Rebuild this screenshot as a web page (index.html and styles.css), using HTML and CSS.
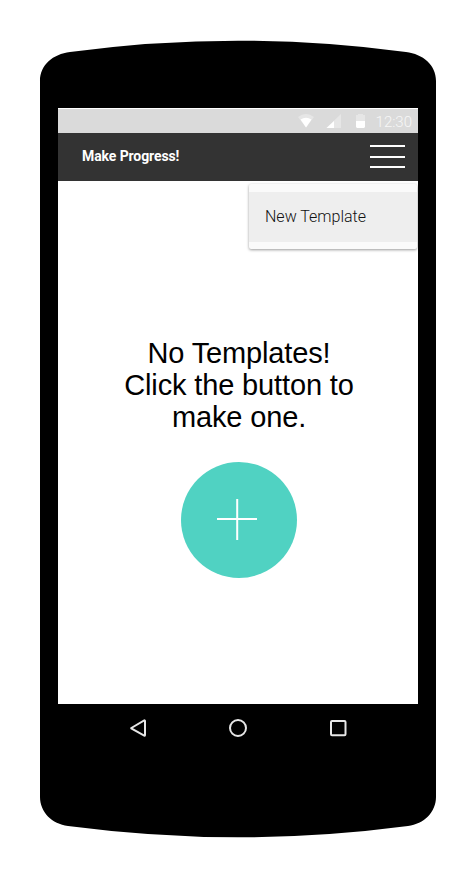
FILE: index.html
```html
<!DOCTYPE html>
<html lang="en">
<head>
<meta charset="utf-8">
<title>Make Progress!</title>
<link rel="stylesheet" href="styles.css">
</head>
<body>
<div class="phone">
  <svg class="shell" viewBox="0 0 476 878" aria-hidden="true">
    <path d="M40 81C40 65 53 54 70 52Q154 40.7 238 40.7Q322 40.7 406 52C423 54 436 65 436 81V797C436 812 424 824 408 826Q322 837.3 238 837.3Q154 837.3 68 826C52 824 40 812 40 797Z"/>
  </svg>
  <main class="screen">
    <div class="status">
      <svg class="status-icons" viewBox="0 0 72 24" aria-hidden="true">
        <path class="dim" d="M0 8Q8 2 16 8L8 18.500Z"/>
        <path class="lit" d="M2.500 10.500Q8 7 13.500 10.500L8 18.500Z"/>
        <path class="dim" d="M43 5V19H28.500Z"/>
        <path class="lit" d="M36 12V19H28.500Z"/>
        <path class="dim" d="M60 5H65V6H67V13H58V6H60Z"/>
        <path class="lit" d="M58 12H67V18L66 19H59L58 18Z"/>
      </svg>
      <span class="clock">12:30</span>
    </div>
    <header class="bar">
      <h1 class="title">Make Progress!</h1>
      <button class="burger" aria-label="Menu"><i></i><i></i><i></i></button>
      <div class="menu"><div class="menu-item"><span class="menu-label">New Template</span></div></div>
    </header>
    <section class="empty">
      <p class="message">No Templates!<br>Click the button to<br>make one.</p>
      <button class="add" aria-label="Add template">
        <svg class="plus" viewBox="0 0 116 116" aria-hidden="true"><path d="M36 57H76M56.200 37V78"/></svg>
      </button>
    </section>
  </main>
  <nav class="nav">
    <svg viewBox="0 0 20 20"><path d="M3.300 10L16.200 2.400Q17 2.200 17 3V17Q17 17.900 16.200 17.600L3.300 10.500Z"/></svg>
    <svg viewBox="0 0 20 20"><circle cx="10" cy="10" r="8"/></svg>
    <svg viewBox="0 0 20 20"><rect x="3" y="3" width="14.500" height="14.300" rx="1"/></svg>
  </nav>
</div>
</body>
</html>
```
FILE: styles.css
```css
* { box-sizing: border-box; }
body { margin: 0; background: #fff; }
button { border: 0; padding: 0; }
.phone {
  position: relative;
  width: 476px;
  height: 878px;
  padding: 108px 58px 0;
}
.shell { position: absolute; inset: 0; width: 476px; height: 878px; }
.screen {
  position: relative;
  display: flex;
  flex-direction: column;
  height: 596px;
  background: #fff;
}
.status {
  display: flex;
  justify-content: flex-end;
  height: 25px;
  padding-right: 6px;
  border-top: 1px solid #fff;
  background: #dadada;
}
.status-icons { width: 72px; height: 24px; margin-right: 6px; }
.dim { fill: #e6e6e6; }
.lit { fill: #fff; }
.clock {
  color: #f7f7f7;
  font: 300 15px/26px Roboto, sans-serif;
}
.bar {
  position: relative;
  display: flex;
  justify-content: space-between;
  height: 48px;
  padding: 0 13px 0 24px;
  background: #333;
}
.title {
  margin: 0;
  color: #fff;
  font: 700 14px/46px Roboto, sans-serif;
  letter-spacing: -0.1px;
}
.burger {
  display: grid;
  grid-template-rows: 2px 2px 2px;
  row-gap: 8.500px;
  width: 35px;
  height: 23px;
  margin-top: 12px;
  background: none;
}
.burger i { display: block; width: 35px; background: #fff; }
.menu {
  position: absolute;
  top: 51px;
  right: 1px;
  width: 168px;
  height: 65px;
  padding: 8px 0 7px;
  border-radius: 2px;
  background: #fafafa;
  box-shadow: 0 1px 3px rgba(0, 0, 0, .4);
}
.menu-item {
  height: 50px;
  padding-left: 16px;
  background: #eee;
}
.menu-label {
  color: #111;
  font: 300 16px/49px Roboto, sans-serif;
}
.empty {
  display: flex;
  flex-direction: column;
  align-items: center;
  padding: 156px 0 0 2px;
}
.message {
  margin: 0;
  color: #000;
  font: 29px/32px "Liberation Sans", Arial, sans-serif;
  letter-spacing: -0.14px;
  text-align: center;
}
.add {
  width: 116px;
  height: 116px;
  margin-top: 29px;
  border-radius: 50%;
  background: #50d2c2;
}
.plus { display: block; }
.plus path { fill: none; stroke: #fff; stroke-width: 2; }
.nav {
  position: relative;
  display: flex;
  justify-content: space-between;
  padding: 14px 70px 0;
}
.nav svg { width: 20px; height: 20px; fill: none; stroke: #e6e6e6; stroke-width: 2; }
```
